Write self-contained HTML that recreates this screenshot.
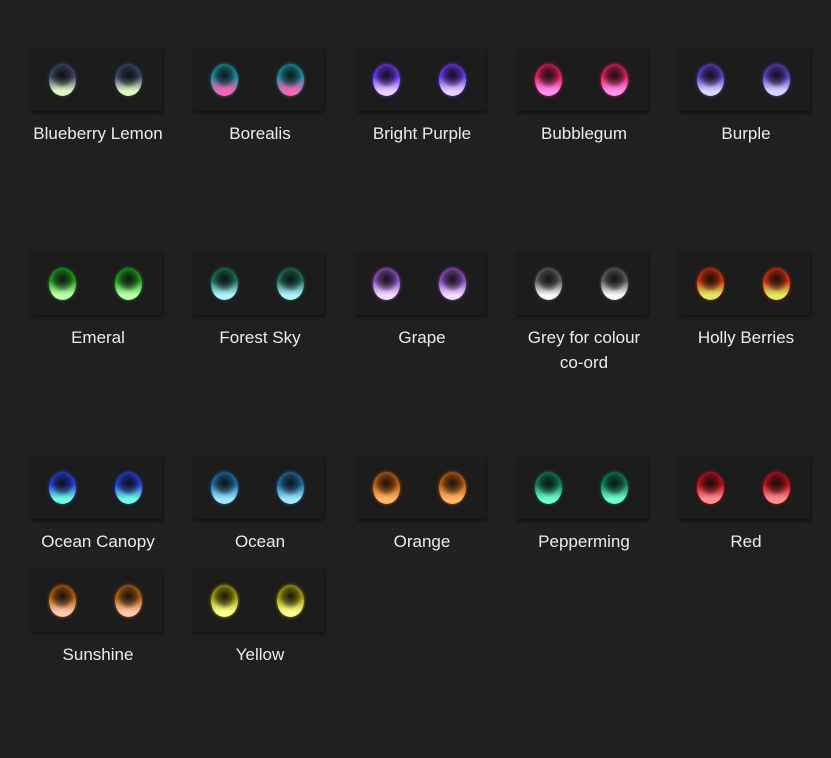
<!DOCTYPE html>
<html><head><meta charset="utf-8"><style>
html,body{margin:0;padding:0;background:#202020;width:831px;height:758px;overflow:hidden}
.c{position:absolute;width:162px}
.t{position:absolute;left:0;top:0;width:132px;height:64px;background:#1c1c1c;box-shadow:1px 2px 3px rgba(0,0,0,.45)}
.o{position:absolute;top:17px;width:27px;height:32px;border-radius:50%}
.o1{left:19px}.o2{left:85px}
.l{position:absolute;left:-13px;width:162px;top:74px;text-align:center;color:#ececec;font:17px/25px "Liberation Sans",sans-serif}
</style></head><body>
<div id="g"></div>
<script>
var d=[
["Blueberry Lemon","#3c4a68","#e0f8c0",30,47],
["Borealis","#1a90a0","#ff60b8",192,47],
["Bright Purple","#6a38f0","#e8d0ff",354,47],
["Bubblegum","#e02060","#ff90f0",516,47],
["Burple","#6040c8","#d8d8ff",678,47],
["Emeral","#20a020","#c0ffb0",30,251],
["Forest Sky","#207060","#b0f4ff",192,251],
["Grape","#9050c0","#f4dcff",354,251],
["Grey for colour<br>co-ord","#606060","#f8f8f8",516,251],
["Holly Berries","#d03010","#d8f060",678,251],
["Ocean Canopy","#2840e0","#70ffd8",30,455],
["Ocean","#2070a8","#a0e8ff",192,455],
["Orange","#c06010","#ffb868",354,455],
["Pepperming","#108060","#70ffc8",516,455],
["Red","#c01020","#ff9090",678,455],
["Sunshine","#b06010","#ffc8b0",30,568],
["Yellow","#a0a010","#ffff90",192,568]];
var h="";
d.forEach(function(e){
var bg="radial-gradient(ellipse 45% 40% at 50% 35%,rgba(10,10,10,.9) 0,rgba(10,10,10,.5) 60%,transparent 100%),linear-gradient(180deg,"+e[1]+" 0%,"+e[1]+" 40%,"+e[2]+" 85%)";
var s='<div class="o" style="background:'+bg+';box-shadow:0 0 3px '+e[1]+'"></div>';
h+='<div class="c" style="left:'+e[3]+'px;top:'+e[4]+'px"><div class="t">'+s.replace('class="o"','class="o o1"')+s.replace('class="o"','class="o o2"')+'</div><div class="l">'+e[0]+'</div></div>';
});
document.getElementById("g").innerHTML=h;
</script>
</body></html>
